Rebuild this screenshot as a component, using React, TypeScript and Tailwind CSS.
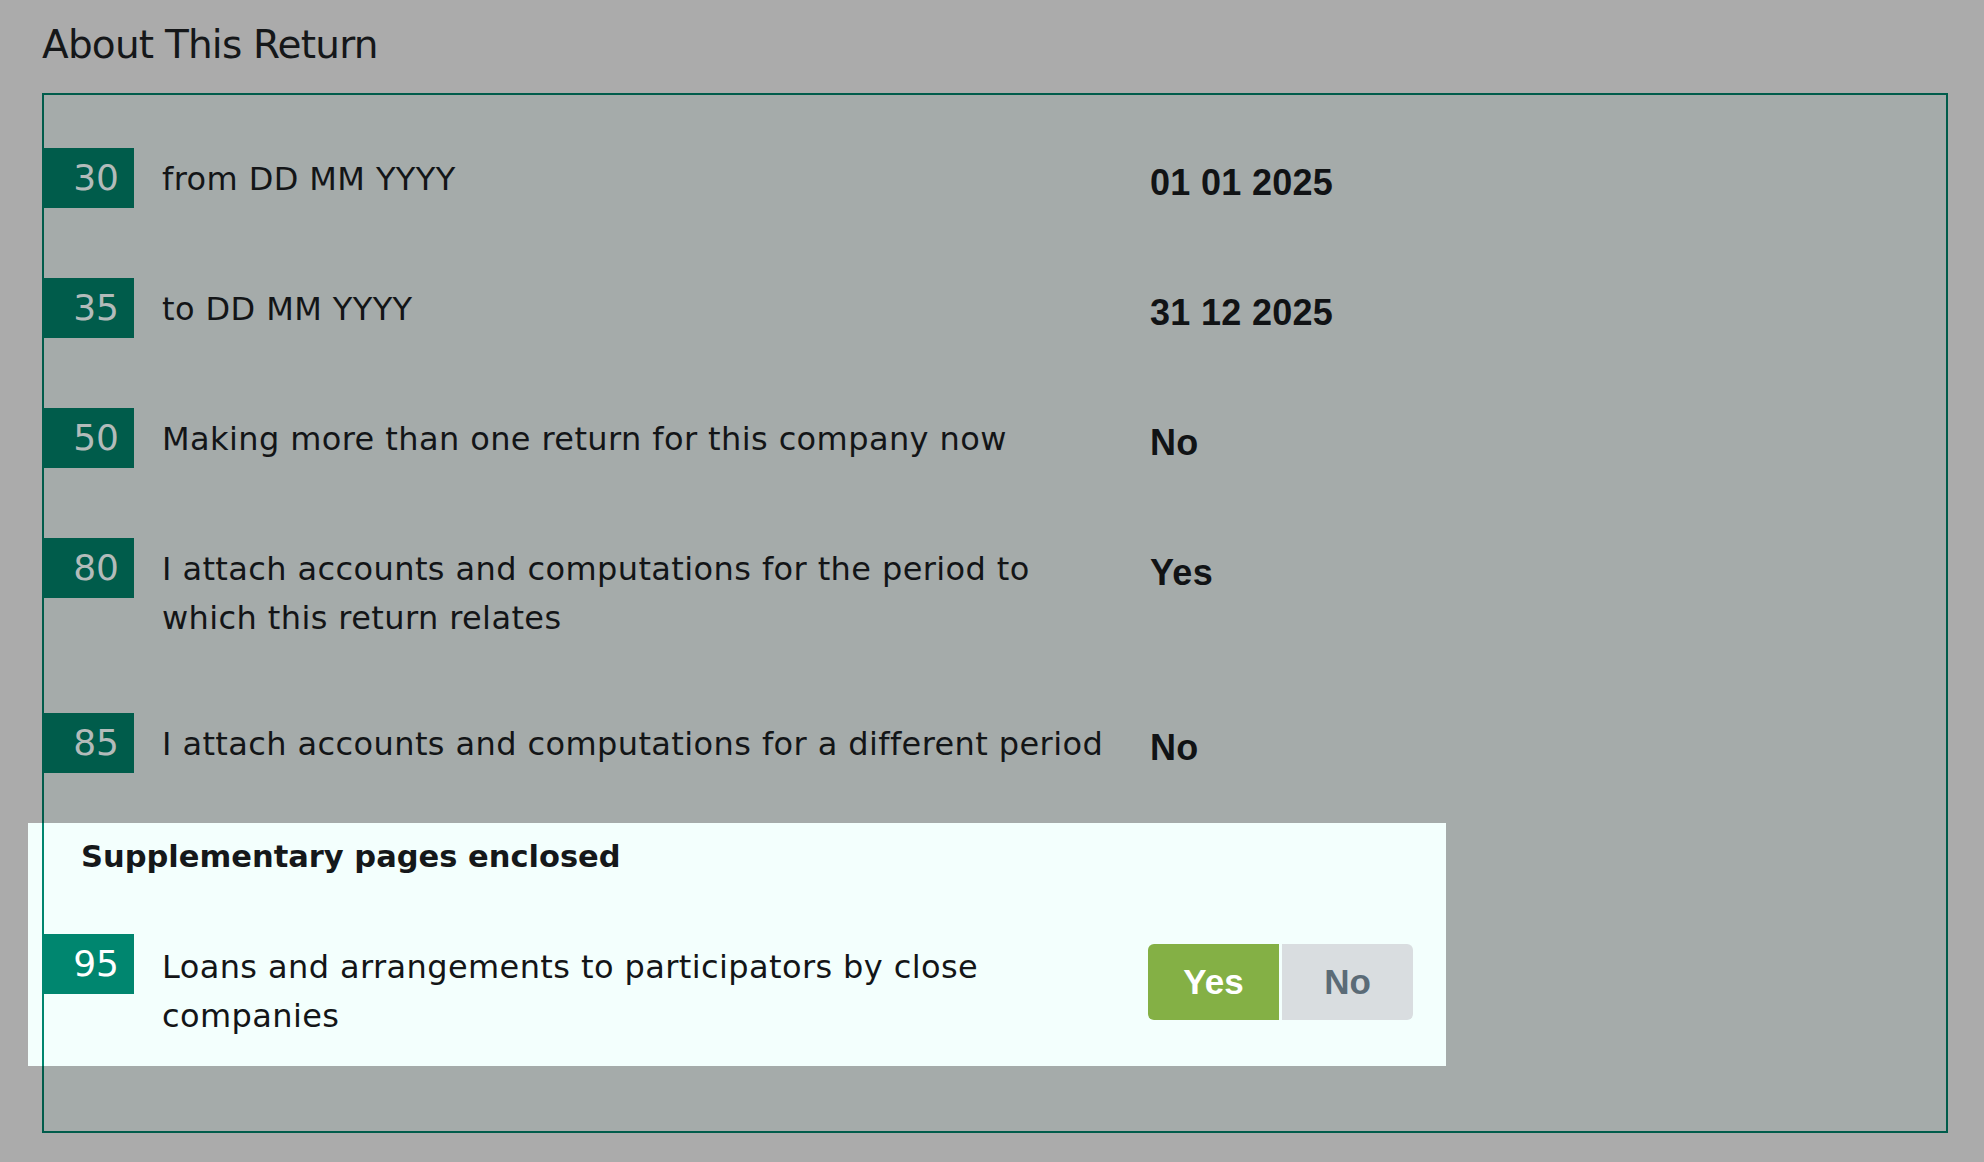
import React from 'react';

interface ReturnLine {
  box: string;
  label: string;
  value: string;
}

const lines: ReturnLine[] = [
  { box: '30', label: 'from DD MM YYYY', value: '01 01 2025' },
  { box: '35', label: 'to DD MM YYYY', value: '31 12 2025' },
  { box: '50', label: 'Making more than one return for this company now', value: 'No' },
  { box: '80', label: 'I attach accounts and computations for the period to which this return relates', value: 'Yes' },
  { box: '85', label: 'I attach accounts and computations for a different period', value: 'No' },
];

const Badge = ({ num, active }: { num: string; active?: boolean }) => (
  <div
    className={
      active
        ? 'w-[90px] h-[60px] shrink-0 flex items-center justify-end pr-[15px] bg-[#00866f] text-white text-[36px] leading-[60px]'
        : 'w-[90px] h-[60px] shrink-0 flex items-center justify-end pr-[15px] bg-[#005c4b] text-[#b3bbba] text-[36px] leading-[60px]'
    }
  >
    {num}
  </div>
);

const Row = ({ line }: { line: ReturnLine }) => (
  <div className="flex items-start mb-[70px]">
    <Badge num={line.box} />
    <div className="ml-[28px] w-[960px] pt-[7px] text-[32px] leading-[49px] tracking-[0.4px] text-[#131517]">{line.label}</div>
    <div className="ml-[28px] pt-[10px] font-['Liberation_Sans',Arial,sans-serif] font-bold text-[36px] leading-[50px] tracking-[0.3px] text-[#111315]">
      {line.value}
    </div>
  </div>
);

export default function App() {
  return (
    <div className="min-h-screen bg-[#ababab] pl-[42px] pr-[36px] pt-[21px] pb-[32px] font-['DejaVu_Sans',sans-serif]">
      <h1 className="text-[39px] leading-[47px] tracking-[-0.8px] text-[#151719]">About This Return</h1>

      <div className="mt-[25px] border-2 border-[#005c4b] bg-[#a5abaa] pt-[53px] pb-[65px]">
        {lines.map((line) => (
          <Row key={line.box} line={line} />
        ))}

        {/* highlighted section */}
        <div className="relative -mt-[20px] -ml-[16px] w-[1418px] bg-[#f3fffd] pt-[14px] pb-[25px]">
          <div className="absolute left-[14px] top-0 bottom-0 w-[2px] bg-[#00866f]" />
          <h3 className="pl-[53px] text-[30.5px] leading-[40px] font-bold text-[#15181a]">Supplementary pages enclosed</h3>
          <div className="flex items-start mt-[57px] ml-[16px]">
            <Badge num="95" active />
            <div className="ml-[28px] w-[960px] pt-[9px] text-[32px] leading-[49px] tracking-[0.4px] text-[#131517]">
              Loans and arrangements to participators by close companies
            </div>
            <div className="ml-[26px] mt-[10px] flex gap-[3px] font-['Liberation_Sans',Arial,sans-serif] font-bold text-[35px]">
              <button className="w-[131px] h-[76px] rounded-l-[6px] bg-[#84b045] text-white">Yes</button>
              <button className="w-[131px] h-[76px] rounded-r-[6px] bg-[#d9dde0] text-[#5b6b77]">No</button>
            </div>
          </div>
        </div>
      </div>
    </div>
  );
}
